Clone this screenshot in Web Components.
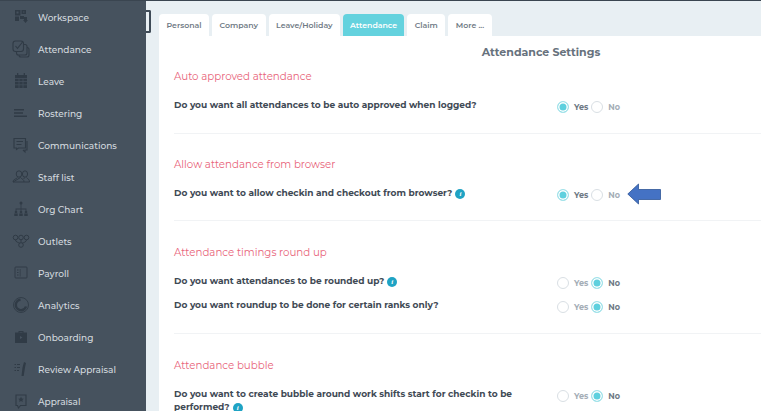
<!DOCTYPE html>
<html>
<head>
<meta charset="utf-8">
<style>
  html, body { margin: 0; height: 100%; background: #fff; overflow: hidden; }
  body { font-family: Montserrat, Inter, "Open Sans", sans-serif; }
</style>
</head>
<body>
<app-shell>
  <side-nav slot="nav">
    <nav-item label="Workspace" icon="workspace"></nav-item>
    <nav-item label="Attendance" icon="attendance"></nav-item>
    <nav-item label="Leave" icon="leave"></nav-item>
    <nav-item label="Rostering" icon="rostering"></nav-item>
    <nav-item label="Communications" icon="comms"></nav-item>
    <nav-item label="Staff list" icon="staff"></nav-item>
    <nav-item label="Org Chart" icon="org"></nav-item>
    <nav-item label="Outlets" icon="outlets"></nav-item>
    <nav-item label="Payroll" icon="payroll"></nav-item>
    <nav-item label="Analytics" icon="analytics"></nav-item>
    <nav-item label="Onboarding" icon="onboarding"></nav-item>
    <nav-item label="Review Appraisal" icon="review"></nav-item>
    <nav-item label="Appraisal" icon="appraisal"></nav-item>
  </side-nav>
  <tab-bar>
    <tab-item>Personal</tab-item>
    <tab-item>Company</tab-item>
    <tab-item>Leave/Holiday</tab-item>
    <tab-item active>Attendance</tab-item>
    <tab-item>Claim</tab-item>
    <tab-item>More ...</tab-item>
  </tab-bar>
  <settings-panel heading="Attendance Settings">
    <settings-group title="Auto approved attendance" style="--pad-bottom:17px;--gap-after:24px">
      <setting-row value="yes">Do you want all attendances to be auto approved when logged?</setting-row>
    </settings-group>
    <settings-group title="Allow attendance from browser" style="--pad-bottom:16px;--gap-after:25px">
      <setting-row value="yes" info arrow>Do you want to allow checkin and checkout from browser?</setting-row>
    </settings-group>
    <settings-group title="Attendance timings round up" style="--pad-bottom:17px;--gap-after:25px">
      <setting-row value="no" info>Do you want attendances to be rounded up?</setting-row>
      <setting-row value="no">Do you want roundup to be done for certain ranks only?</setting-row>
    </settings-group>
    <settings-group title="Attendance bubble" last>
      <setting-row value="no" info>Do you want to create bubble around work shifts start for checkin to be performed?</setting-row>
    </settings-group>
  </settings-panel>
</app-shell>

<script>
(function () {
  const FONT = '"Montserrat", Inter, "Open Sans", sans-serif';
  const SIDE = '#46525e';

  // sidebar icons, drawn in a 22 box centred on x=21 of the page
  const ICONS = {
    workspace: `<g fill="currentColor"><path d="M5 4h5.500v5.500H5zM11.500 4H16v4h-4.500zM5 10.500h4V15H5z"/><path d="M10 10h4v3h-4zM14 11h3v3h1l-2.500 3-2.500-3h1z"/></g><path d="M6.500 5.500h2v2h-2zM13 5.500h1.500v1H13z" fill="${SIDE}"/>`,
    attendance: `<g fill="none" stroke="currentColor" stroke-width="1.100"><rect x="3" y="3" width="10.500" height="10.500" rx="2.500"/><path d="M13.500 6.500h1.500a2 2 0 0 1 2 2V15a2 2 0 0 1-2 2H8.500a2 2 0 0 1-2-2v-1.500"/><path d="M17 9.500a2 2 0 0 1 2 2V17a2 2 0 0 1-2 2h-6a2 2 0 0 1-2-2"/><path d="M5.500 8l2 2.300 5-6.300"/></g>`,
    leave: `<path d="M5 5h12v13H5z" fill="currentColor"/><path d="M7 3h1.300v3.500H7zM13.700 3H15v3.500h-1.300z" fill="currentColor"/><path d="M5 8.500h12M5 11.500h12M5 14.800h12M9 8.500V18M13 8.500V18" stroke="${SIDE}" stroke-width=".7"/>`,
    rostering: `<path d="M4 7h10v1.600H4zM4 10.200h9v1.600H4zM4 13.400h13V15H4z" fill="currentColor"/>`,
    comms: `<g fill="none" stroke="currentColor" stroke-width="1.100"><path d="M4 4.500h11.500v9.500H8.500L6.500 15.500V14H4z"/><path d="M6.500 7.500h6.500M6.500 10.500h5"/><path d="M17 7v9h-2v2l-2-2"/></g>`,
    staff: `<g fill="none" stroke="currentColor" stroke-width="1"><ellipse cx="9" cy="8" rx="2.800" ry="3.200"/><ellipse cx="15" cy="8" rx="2.600" ry="3.200"/><path d="M3 16c0-3 3-2.500 4.500-4.500M10.500 11.500C12 13.500 14 13 14 16H3zM14 13c0-.5 0-1 .300-1.500M16.500 11.500C17.500 13 19.500 13 19.500 16H14"/></g>`,
    org: `<g fill="currentColor"><circle cx="11" cy="5" r="1.500"/><path d="M10.600 6h.8v5h-.8zM5.600 10.600h10.800v.8H5.600zM5.600 11h.8v2h-.8zM15.600 11h.8v2h-.8zM10.600 11h.8v2h-.8z"/><circle cx="6" cy="14" r="1.300"/><circle cx="11" cy="14" r="1.300"/><circle cx="16" cy="14" r="1.300"/><path d="M4.300 15.500h3.400V18H4.300zM9.300 15.500h3.400V18H9.300zM14.300 15.500h3.400V18h-3.400z"/></g>`,
    outlets: `<g fill="none" stroke="currentColor" stroke-width="1"><circle cx="5.500" cy="7.500" r="2.300"/><circle cx="11" cy="7.500" r="2.300"/><circle cx="16.500" cy="7.500" r="2.300"/><circle cx="11" cy="15" r="2.300"/><path d="M5.500 9.800c0 2.400 3 2.600 4.300 3.400M11 9.800v2.900M16.500 9.800c0 2.400-3 2.600-4.300 3.400"/></g>`,
    payroll: `<g fill="none" stroke="currentColor" stroke-width="1"><rect x="5" y="5" width="12" height="11" rx=".8"/></g><path d="M7 7.500h1.500v1H7zM7 10h1.500v1H7zM7 12.500h1.500v1H7zM9.800 7v7.500h.7V7z" fill="currentColor"/>`,
    analytics: `<g fill="none" stroke="currentColor"><circle cx="11" cy="11" r="7.500" stroke-width=".9"/><path d="M16 12.500a5.200 5.200 0 1 1-5.500-6.700" stroke-width="2.400"/></g>`,
    onboarding: `<path d="M8.500 6.500V5h5v1.500H17V17H5V6.500zM9.500 6.500h3V6h-3z" fill="currentColor" fill-rule="evenodd"/><path d="M10 10l2.500 1.500L10 13z" fill="${SIDE}"/>`,
    review: `<g fill="currentColor"><path d="M4.500 6h1.500v1H4.500zM7 6h3v1H7zM4.500 9h1.500v1H4.500zM7 9h3v1H7zM4.500 12h1.500v1H4.500zM7 12h2v1H7z"/><path d="M14 4l2 1-1 4.500-1.300 8.500H11.500l1-8.500z"/></g>`,
    appraisal: `<path d="M6 5h10v10.500H10.500L8.500 18l-1-2.500H6z" fill="none" stroke="currentColor" stroke-width="1.100"/><path d="M11 6.800l.9 1.700 1.900.3-1.400 1.300.4 1.900-1.800-.9-1.800.9.400-1.900-1.400-1.300 1.900-.3z" fill="currentColor"/>`
  };

  class AppShell extends HTMLElement {
    constructor() {
      super();
      this.attachShadow({ mode: 'open' });
      this.shadowRoot.innerHTML = `
        <style>
          :host {
            display: grid;
            grid-template-columns: 146px 1fr;
            height: 411px;
            width: 761px;
            overflow: hidden;
            position: relative;
            font-family: ${FONT};
          }
          aside { background: ${SIDE}; border-top: 1px solid #3a4550; overflow: hidden; }
          main {
            background: #e8eff3;
            border-top: 1px solid #3a4550;
            padding: 13px 0 0 13px;
            min-width: 0;
            overflow: hidden;
          }
          /* the dark bracket that sticks out of the sidebar */
          .bracket {
            position: absolute;
            left: 146px;
            top: 10px;
            box-sizing: border-box;
            width: 5px;
            height: 23px;
            border: 2px solid #3f4b57;
            border-left: 0;
            border-radius: 0 2px 2px 0;
          }
        </style>
        <aside><slot name="nav"></slot></aside>
        <main><slot></slot></main>
        <div class="bracket"></div>
      `;
    }
  }

  class SideNav extends HTMLElement {
    constructor() {
      super();
      this.attachShadow({ mode: 'open' });
      this.shadowRoot.innerHTML = `
        <style>
          :host { display: flex; flex-direction: column; }
        </style>
        <slot></slot>
      `;
    }
  }

  class NavItem extends HTMLElement {
    constructor() {
      super();
      this.attachShadow({ mode: 'open' });
    }
    connectedCallback() {
      const label = this.getAttribute('label') || '';
      const icon = ICONS[this.getAttribute('icon')] || '';
      this.shadowRoot.innerHTML = `
        <style>
          :host {
            display: flex;
            align-items: center;
            gap: 6px;
            height: 32px;
            padding-left: 10px;
            color: #d3d9de;
            font-size: 9px;
            font-weight: 500;
            white-space: nowrap;
          }
          svg { width: 22px; height: 22px; color: #303b46; flex: none; }
        </style>
        <svg viewBox="0 0 22 22" aria-hidden="true">${icon}</svg>
        <span>${label}</span>
      `;
    }
  }

  class TabBar extends HTMLElement {
    constructor() {
      super();
      this.attachShadow({ mode: 'open' });
      this.shadowRoot.innerHTML = `
        <style>
          :host { display: flex; gap: 3px; height: 22px; }
        </style>
        <slot></slot>
      `;
    }
  }

  class TabItem extends HTMLElement {
    constructor() {
      super();
      this.attachShadow({ mode: 'open' });
      this.shadowRoot.innerHTML = `
        <style>
          :host {
            display: flex;
            align-items: center;
            padding: 0 7.500px;
            background: #fff;
            color: #6f7a85;
            border-radius: 4px 4px 0 0;
            font-size: 7.800px;
            font-weight: 600;
            white-space: nowrap;
          }
          :host([active]) { background: #64d2de; color: #fff; padding: 0 7px; }
        </style>
        <slot></slot>
      `;
    }
  }

  class SettingsPanel extends HTMLElement {
    constructor() {
      super();
      this.attachShadow({ mode: 'open' });
    }
    connectedCallback() {
      this.shadowRoot.innerHTML = `
        <style>
          :host {
            display: block;
            background: #fff;
            height: 400px;
            padding: 9px 0 0 15px;
            color: #3f4a55;
          }
          h2 {
            margin: 0 0 11px;
            padding-left: 147px;
            text-align: center;
            font-size: 11px;
            font-weight: 700;
            line-height: 14px;
            color: #67727d;
          }
        </style>
        <h2>${this.getAttribute('heading') || ''}</h2>
        <slot></slot>
      `;
    }
  }

  class SettingsGroup extends HTMLElement {
    constructor() {
      super();
      this.attachShadow({ mode: 'open' });
    }
    connectedCallback() {
      this.shadowRoot.innerHTML = `
        <style>
          :host {
            display: block;
            padding-bottom: var(--pad-bottom, 20px);
            margin-bottom: var(--gap-after, 24px);
            border-bottom: 1px solid #f1f3f5;
          }
          :host([last]) { border-bottom: 0; }
          h3 {
            margin: 0 0 14px;
            font-size: 10.250px;
            font-weight: 400;
            line-height: 14px;
            color: #e8647a;
          }
          .rows { display: flex; flex-direction: column; gap: 6px; }
        </style>
        <h3>${this.getAttribute('title') || ''}</h3>
        <div class="rows"><slot></slot></div>
      `;
    }
  }

  class SettingRow extends HTMLElement {
    constructor() {
      super();
      this.attachShadow({ mode: 'open' });
    }
    connectedCallback() {
      const yes = this.getAttribute('value') === 'yes';
      const info = this.hasAttribute('info')
        ? '<span class="info">i</span>' : '';
      const arrow = this.hasAttribute('arrow')
        ? '<svg class="arrow" viewBox="0 0 34 22" aria-hidden="true"><path d="M.8 11 11.500 1v5.500h22v10h-22V21z" fill="#4472c4" stroke="#2f5597" stroke-width=".8"/></svg>' : '';
      this.shadowRoot.innerHTML = `
        <style>
          :host {
            display: grid;
            grid-template-columns: 383px auto;
            align-items: start;
            min-height: 18px;
          }
          .q {
            max-width: 345px;
            font-size: 9px;
            font-weight: 700;
            line-height: 13px;
            color: #3f4a55;
          }
          .info {
            display: inline-flex;
            align-items: center;
            justify-content: center;
            width: 10px;
            height: 10px;
            margin-left: 3px;
            border-radius: 50%;
            background: #1fa3c4;
            color: #fff;
            font: italic 700 7px "Liberation Serif", serif;
            vertical-align: .5px;
          }
          .opts { display: flex; align-items: center; height: 18px; }
          .lbl { font-size: 8px; font-weight: 700; color: #a4adb6; margin-left: 5px; margin-right: 3px; }
          .lbl.on { color: #6d7883; }
          .radio {
            box-sizing: border-box;
            width: 12px;
            height: 12px;
            border: 1px solid #d9dfe4;
            border-radius: 50%;
            background: #fff;
            flex: none;
          }
          .radio.on {
            border-color: #a5e3ea;
            background: #5ed0de;
            box-shadow: inset 0 0 0 1.500px #fff;
          }
          .arrow { width: 34px; height: 22px; margin: -2px 0 0 4px; flex: none; }
        </style>
        <div class="q"><slot></slot>${info}</div>
        <div class="opts">
          <span class="radio ${yes ? 'on' : ''}"></span><span class="lbl ${yes ? 'on' : ''}">Yes</span>
          <span class="radio ${yes ? '' : 'on'}"></span><span class="lbl ${yes ? '' : 'on'}">No</span>
          ${arrow}
        </div>
      `;
    }
  }

  customElements.define('app-shell', AppShell);
  customElements.define('side-nav', SideNav);
  customElements.define('nav-item', NavItem);
  customElements.define('tab-bar', TabBar);
  customElements.define('tab-item', TabItem);
  customElements.define('settings-panel', SettingsPanel);
  customElements.define('settings-group', SettingsGroup);
  customElements.define('setting-row', SettingRow);
})();
</script>
</body>
</html>
